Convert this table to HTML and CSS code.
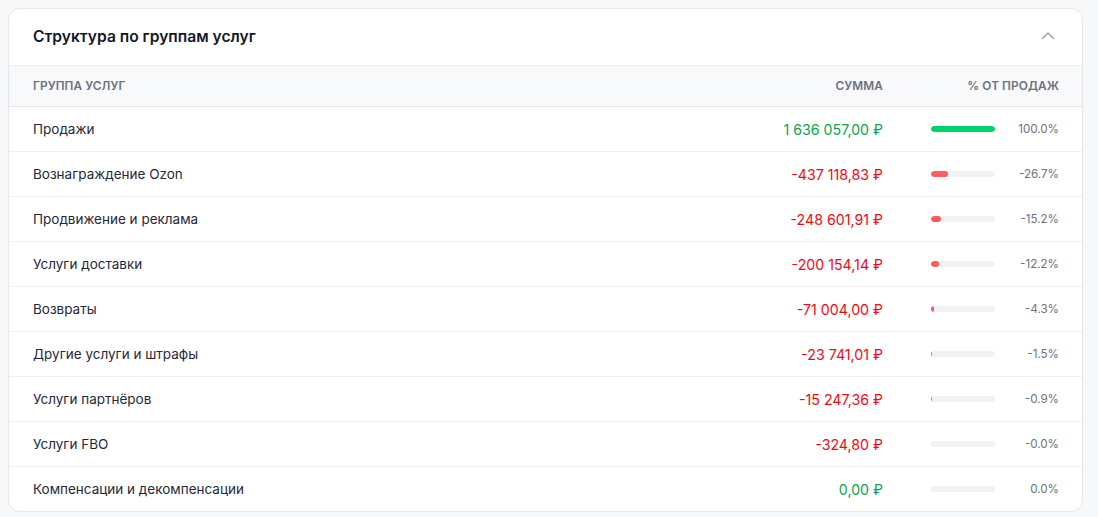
FILE: index.html
```html
<!DOCTYPE html>
<html lang="ru">
<head>
  <meta charset="UTF-8">
  <meta name="viewport" content="width=device-width, initial-scale=1.0">
  <link rel="stylesheet" href="styles.css">
</head>
<body>
<div class="card">
  <div class="card-header">
    <div class="card-title">Структура по группам услуг</div>
    <svg class="chevron" width="16" height="16" viewBox="0 0 16 16" fill="none">
      <path d="M2.5 10.5 L8 5 L13.5 10.5" stroke="#9ca3af" stroke-width="1.5" stroke-linecap="round" stroke-linejoin="round"/>
    </svg>
  </div>
  <div class="table">
    <div class="row head">
      <div>Группа услуг</div>
      <div class="sum">Сумма</div>
      <div class="pct-head">% от продаж</div>
    </div>
    <div class="row">
      <div>Продажи</div>
      <div class="sum plus">1 636 057,00 ₽</div>
      <div class="pct"><div class="track"><div class="fill green" style="width:100%"></div></div><span>100.0%</span></div>
    </div>
    <div class="row">
      <div>Вознаграждение Ozon</div>
      <div class="sum minus">-437 118,83 ₽</div>
      <div class="pct"><div class="track"><div class="fill red" style="width:26.7%"></div></div><span>-26.7%</span></div>
    </div>
    <div class="row">
      <div>Продвижение и реклама</div>
      <div class="sum minus">-248 601,91 ₽</div>
      <div class="pct"><div class="track"><div class="fill red" style="width:15.2%"></div></div><span>-15.2%</span></div>
    </div>
    <div class="row">
      <div>Услуги доставки</div>
      <div class="sum minus">-200 154,14 ₽</div>
      <div class="pct"><div class="track"><div class="fill red" style="width:12.2%"></div></div><span>-12.2%</span></div>
    </div>
    <div class="row">
      <div>Возвраты</div>
      <div class="sum minus">-71 004,00 ₽</div>
      <div class="pct"><div class="track"><div class="fill red" style="width:4.3%"></div></div><span>-4.3%</span></div>
    </div>
    <div class="row">
      <div>Другие услуги и штрафы</div>
      <div class="sum minus">-23 741,01 ₽</div>
      <div class="pct"><div class="track"><div class="fill red" style="width:1.5%"></div></div><span>-1.5%</span></div>
    </div>
    <div class="row">
      <div>Услуги партнёров</div>
      <div class="sum minus">-15 247,36 ₽</div>
      <div class="pct"><div class="track"><div class="fill red" style="width:0.9%"></div></div><span>-0.9%</span></div>
    </div>
    <div class="row">
      <div>Услуги FBO</div>
      <div class="sum minus">-324,80 ₽</div>
      <div class="pct"><div class="track"><div class="fill red" style="width:0%"></div></div><span>-0.0%</span></div>
    </div>
    <div class="row">
      <div>Компенсации и декомпенсации</div>
      <div class="sum plus">0,00 ₽</div>
      <div class="pct"><div class="track"><div class="fill green" style="width:0%"></div></div><span>0.0%</span></div>
    </div>
  </div>
</div>
</body>
</html>
```

FILE: styles.css
```css
body {
  margin: 0;
  padding: 8px;
  background-color: #f7f8fa;
  font-family: Inter, "Noto Sans", sans-serif;
  color: #111827;
}

.card {
  background-color: #ffffff;
  border: 1px solid #e5e7eb;
  border-radius: 12px;
  overflow: hidden;
  width: 1073px;
}

.card-header {
  display: flex;
  justify-content: space-between;
  align-items: center;
  height: 56px;
  padding: 0 24px;
}

.card-title {
  font-size: 15.6px;
  font-weight: 600;
  color: #111827;
  margin-top: -1px;
}

.chevron {
  margin-right: 2px;
  margin-top: -2px;
}

.row {
  display: grid;
  grid-template-columns: 1fr 200px 128px;
  column-gap: 48px;
  align-items: center;
  height: 44px;
  padding: 0 23px 0 24px;
  border-top: 1px solid #eef0f2;
  font-size: 13.5px;
  color: #1f2937;
}

.row.head {
  height: 40px;
  background-color: #f8f9fb;
  border-top: 1px solid #eef0f2;
  border-bottom: 1px solid #e5e7eb;
  font-size: 11.8px;
  font-weight: 600;
  letter-spacing: 0.1px;
  text-transform: uppercase;
  color: #6b7280;
}

.row.head + .row {
  border-top: none;
}

.sum {
  text-align: right;
  font-size: 14.2px;
}

.row.head .sum {
  font-size: 11.8px;
}

.pct-head {
  text-align: right;
}

.plus {
  color: #0ea34c;
}

.minus {
  color: #ee0a14;
}

.pct {
  display: flex;
  align-items: center;
  justify-content: space-between;
  font-size: 11.6px;
  color: #6b7280;
}

.track {
  width: 64px;
  height: 6px;
  border-radius: 3px;
  background-color: #f1f2f4;
  overflow: hidden;
}

.fill {
  height: 100%;
  border-radius: 3px;
}

.fill.green {
  background-color: #00d26a;
}

.fill.red {
  background-color: #ff5c60;
}
```
